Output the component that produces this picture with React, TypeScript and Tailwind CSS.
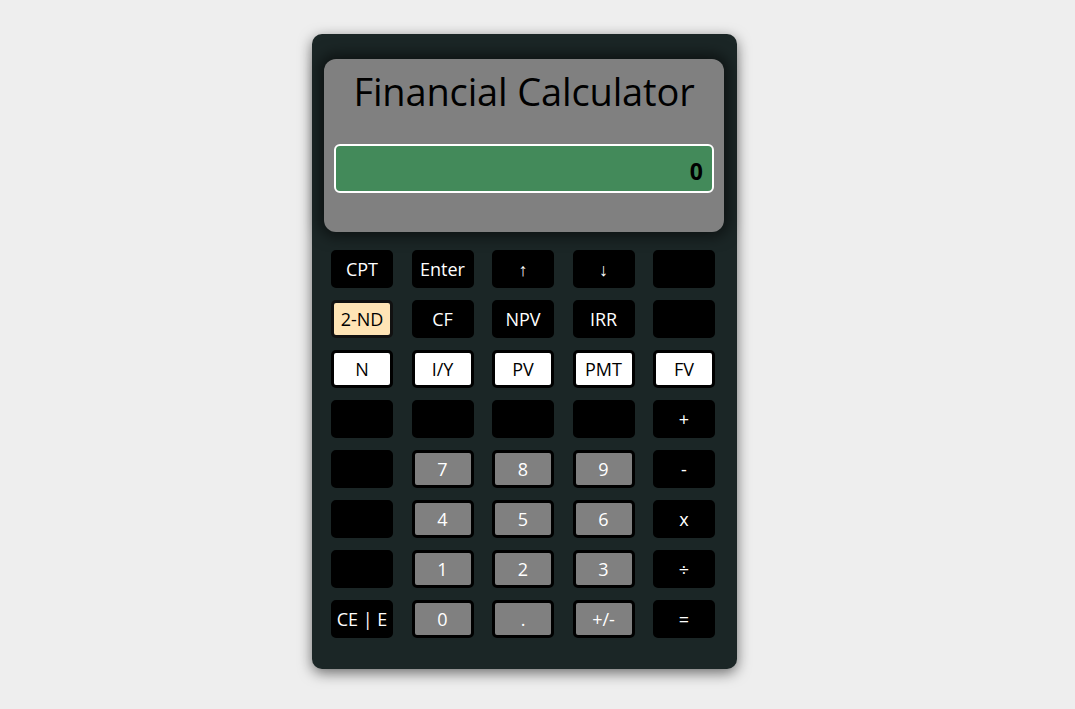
import React from "react";

type Btn = { label: string; kind: "black" | "white" | "gray" | "tan" };

const rows: Btn[][] = [
  [
    { label: "CPT", kind: "black" },
    { label: "Enter", kind: "black" },
    { label: "↑", kind: "black" },
    { label: "↓", kind: "black" },
    { label: "", kind: "black" },
  ],
  [
    { label: "2-ND", kind: "tan" },
    { label: "CF", kind: "black" },
    { label: "NPV", kind: "black" },
    { label: "IRR", kind: "black" },
    { label: "", kind: "black" },
  ],
  [
    { label: "N", kind: "white" },
    { label: "I/Y", kind: "white" },
    { label: "PV", kind: "white" },
    { label: "PMT", kind: "white" },
    { label: "FV", kind: "white" },
  ],
  [
    { label: "", kind: "black" },
    { label: "", kind: "black" },
    { label: "", kind: "black" },
    { label: "", kind: "black" },
    { label: "+", kind: "black" },
  ],
  [
    { label: "", kind: "black" },
    { label: "7", kind: "gray" },
    { label: "8", kind: "gray" },
    { label: "9", kind: "gray" },
    { label: "-", kind: "black" },
  ],
  [
    { label: "", kind: "black" },
    { label: "4", kind: "gray" },
    { label: "5", kind: "gray" },
    { label: "6", kind: "gray" },
    { label: "x", kind: "black" },
  ],
  [
    { label: "", kind: "black" },
    { label: "1", kind: "gray" },
    { label: "2", kind: "gray" },
    { label: "3", kind: "gray" },
    { label: "÷", kind: "black" },
  ],
  [
    { label: "CE | E", kind: "black" },
    { label: "0", kind: "gray" },
    { label: ".", kind: "gray" },
    { label: "+/-", kind: "gray" },
    { label: "=", kind: "black" },
  ],
];

const kindClass: Record<Btn["kind"], string> = {
  black: "bg-black text-white border-black",
  white: "bg-white text-black border-black",
  gray: "bg-[#808080] text-white border-black",
  tan: "bg-[#ffe4b5] text-black border-[#111]",
};

export default function App() {
  return (
    <div
      className="min-h-[709px] w-full bg-[#eeeeee] flex justify-center pt-[34px] pr-[26px]"
      style={{ fontFamily: '"Open Sans", "Noto Sans", sans-serif' }}
    >
      <div className="w-[425px] h-[635px] bg-[#1b2626] rounded-[10px] shadow-[0_4px_14px_rgba(0,0,0,0.55)] pt-[25px] pl-[12px] pr-[13px] flex flex-col">
        <div className="h-[173px] bg-[#808080] rounded-[12px] shadow-[0_0_14px_5px_rgba(0,0,0,0.5)] px-[10px] pt-[9px] flex flex-col">
          <h1 className="text-[38px] leading-[46px] text-black text-center tracking-[-0.15px]">
            Financial Calculator
          </h1>
          <div className="mt-[30px] h-[49px] bg-[#438a5a] border-2 border-white rounded-[6px] flex items-center justify-end pr-[9px] pt-[6px]">
            <span className="text-[23px] font-bold text-black">0</span>
          </div>
        </div>
        <div className="mt-[18px] pl-[7px] pr-[9px] flex flex-col gap-[12px]">
          {rows.map((row, i) => (
            <div key={i} className="flex justify-between">
              {row.map((b, j) => (
                <button
                  key={j}
                  className={`w-[62px] h-[38px] rounded-[5px] border-[3px] text-[18px] leading-none flex items-center justify-center ${kindClass[b.kind]}`}
                >
                  {b.label}
                </button>
              ))}
            </div>
          ))}
        </div>
      </div>
    </div>
  );
}
